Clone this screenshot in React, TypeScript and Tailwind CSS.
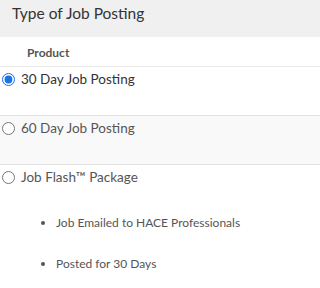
import { useState } from "react";

const options = [
  { id: "30", label: "30 Day Job Posting" },
  { id: "60", label: "60 Day Job Posting" },
  { id: "flash", label: "Job Flash\u2122 Package" },
];

export default function App() {
  const [selected, setSelected] = useState("30");

  return (
    <div className="w-full h-[288px] overflow-hidden bg-white text-[#333] font-['Lato','Noto_Sans',sans-serif]">
      <div className="h-[37px] bg-[#f0f0f0] pl-3 pt-[2px] text-[15.5px] leading-[22px] text-[#333]">
        Type of Job Posting
      </div>
      <div className="h-[30px] border-b border-[#e8e8e8] pl-[27px] pt-[8px] text-[12px] font-bold leading-[16px] text-[#555]">
        Product
      </div>
      {options.map((o, i) => (
        <div
          key={o.id}
          className={
            i === 1
              ? "border-b border-[#e3e3e3] bg-[#f9f9f9]"
              : i === 0
              ? "border-b border-[#e3e3e3]"
              : ""
          }
        >
          <label className="flex h-[48px] items-start gap-[6px] pl-[2px] pt-[2px] text-[13.5px] leading-[20px] text-[#444]">
            <input
              type="radio"
              name="posting"
              checked={selected === o.id}
              onChange={() => setSelected(o.id)}
              className="m-0 mt-[4px] h-[13px] w-[13px] accent-[#1a73e8]"
            />
            <span className={selected === o.id ? "text-[#333]" : "text-[#555]"}>{o.label}</span>
          </label>
          {o.id === "flash" && (
            <ul className="mt-[0px] list-disc pl-[56px] text-[12px] leading-[20px] text-[#555] marker:text-[#555]">
              <li className="mb-[21px]">Job Emailed to HACE Professionals</li>
              <li>Posted for 30 Days</li>
            </ul>
          )}
        </div>
      ))}
    </div>
  );
}
